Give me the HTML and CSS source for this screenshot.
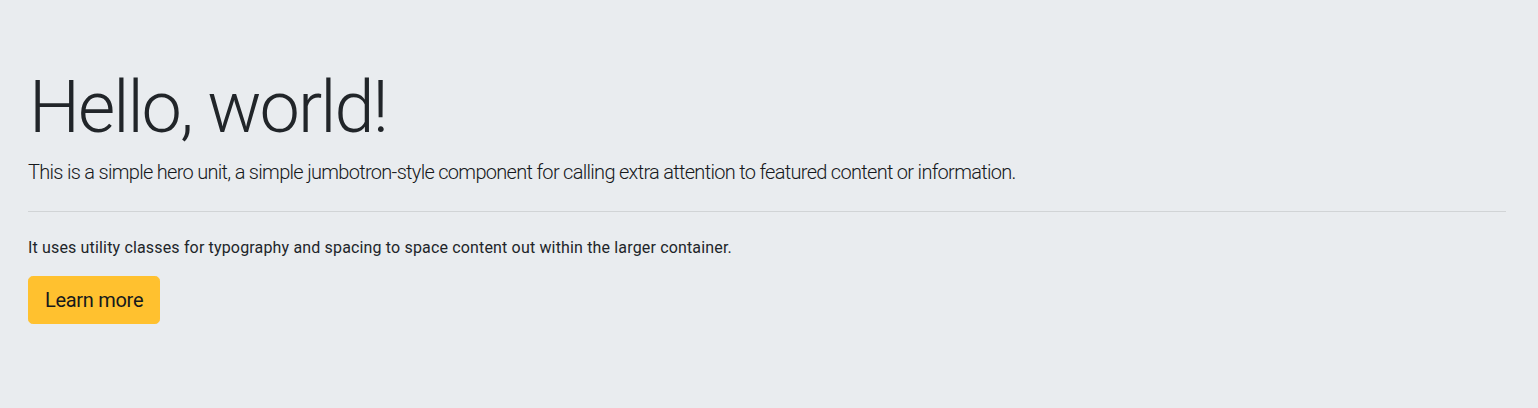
FILE: index.html
```html
<!DOCTYPE html>
<html lang="en">
<head>
<meta charset="utf-8">
<title>Jumbotron</title>
<link rel="stylesheet" href="styles.css">
</head>
<body>
<div class="jumbotron">
  <h1 class="display">Hello, world!</h1>
  <p class="lead">This is a simple hero unit, a simple jumbotron-style component for calling extra attention to featured content or information.</p>
  <hr class="rule">
  <p class="body-text">It uses utility classes for typography and spacing to space content out within the larger container.</p>
  <a class="btn" href="#" role="button">Learn more</a>
</div>
</body>
</html>
```
FILE: styles.css
```css
html, body {
  margin: 0;
  padding: 0;
  background: #e9ecef;
}
body {
  font-family: Roboto, "Liberation Sans", sans-serif;
  color: #212529;
  font-size: 16px;
  line-height: 1.5;
}
.jumbotron {
  padding: 65px 32px 64px 28px;
}
.display {
  margin: 0 0 6px;
  font-size: 72px;
  font-weight: 300;
  line-height: 1.2;
  letter-spacing: -2px;
  padding-left: 1px;
}
.lead {
  margin: 0 0 16px;
  font-size: 20px;
  font-weight: 300;
  line-height: 1.5;
  letter-spacing: -0.7px;
  color: #16191c;
}
.rule {
  margin: 24px 0;
  border: 0;
  border-top: 1px solid rgba(0, 0, 0, 0.1);
}
.body-text {
  margin: 0 0 16px;
  font-size: 16px;
  letter-spacing: 0.16px;
}
.btn {
  display: inline-block;
  padding: 8px 16px;
  font-size: 20px;
  line-height: 1.5;
  letter-spacing: -0.3px;
  border: 1px solid #ffc12f;
  border-radius: 4.8px;
  background: #ffc12f;
  color: #16191c;
  text-decoration: none;
}
```
